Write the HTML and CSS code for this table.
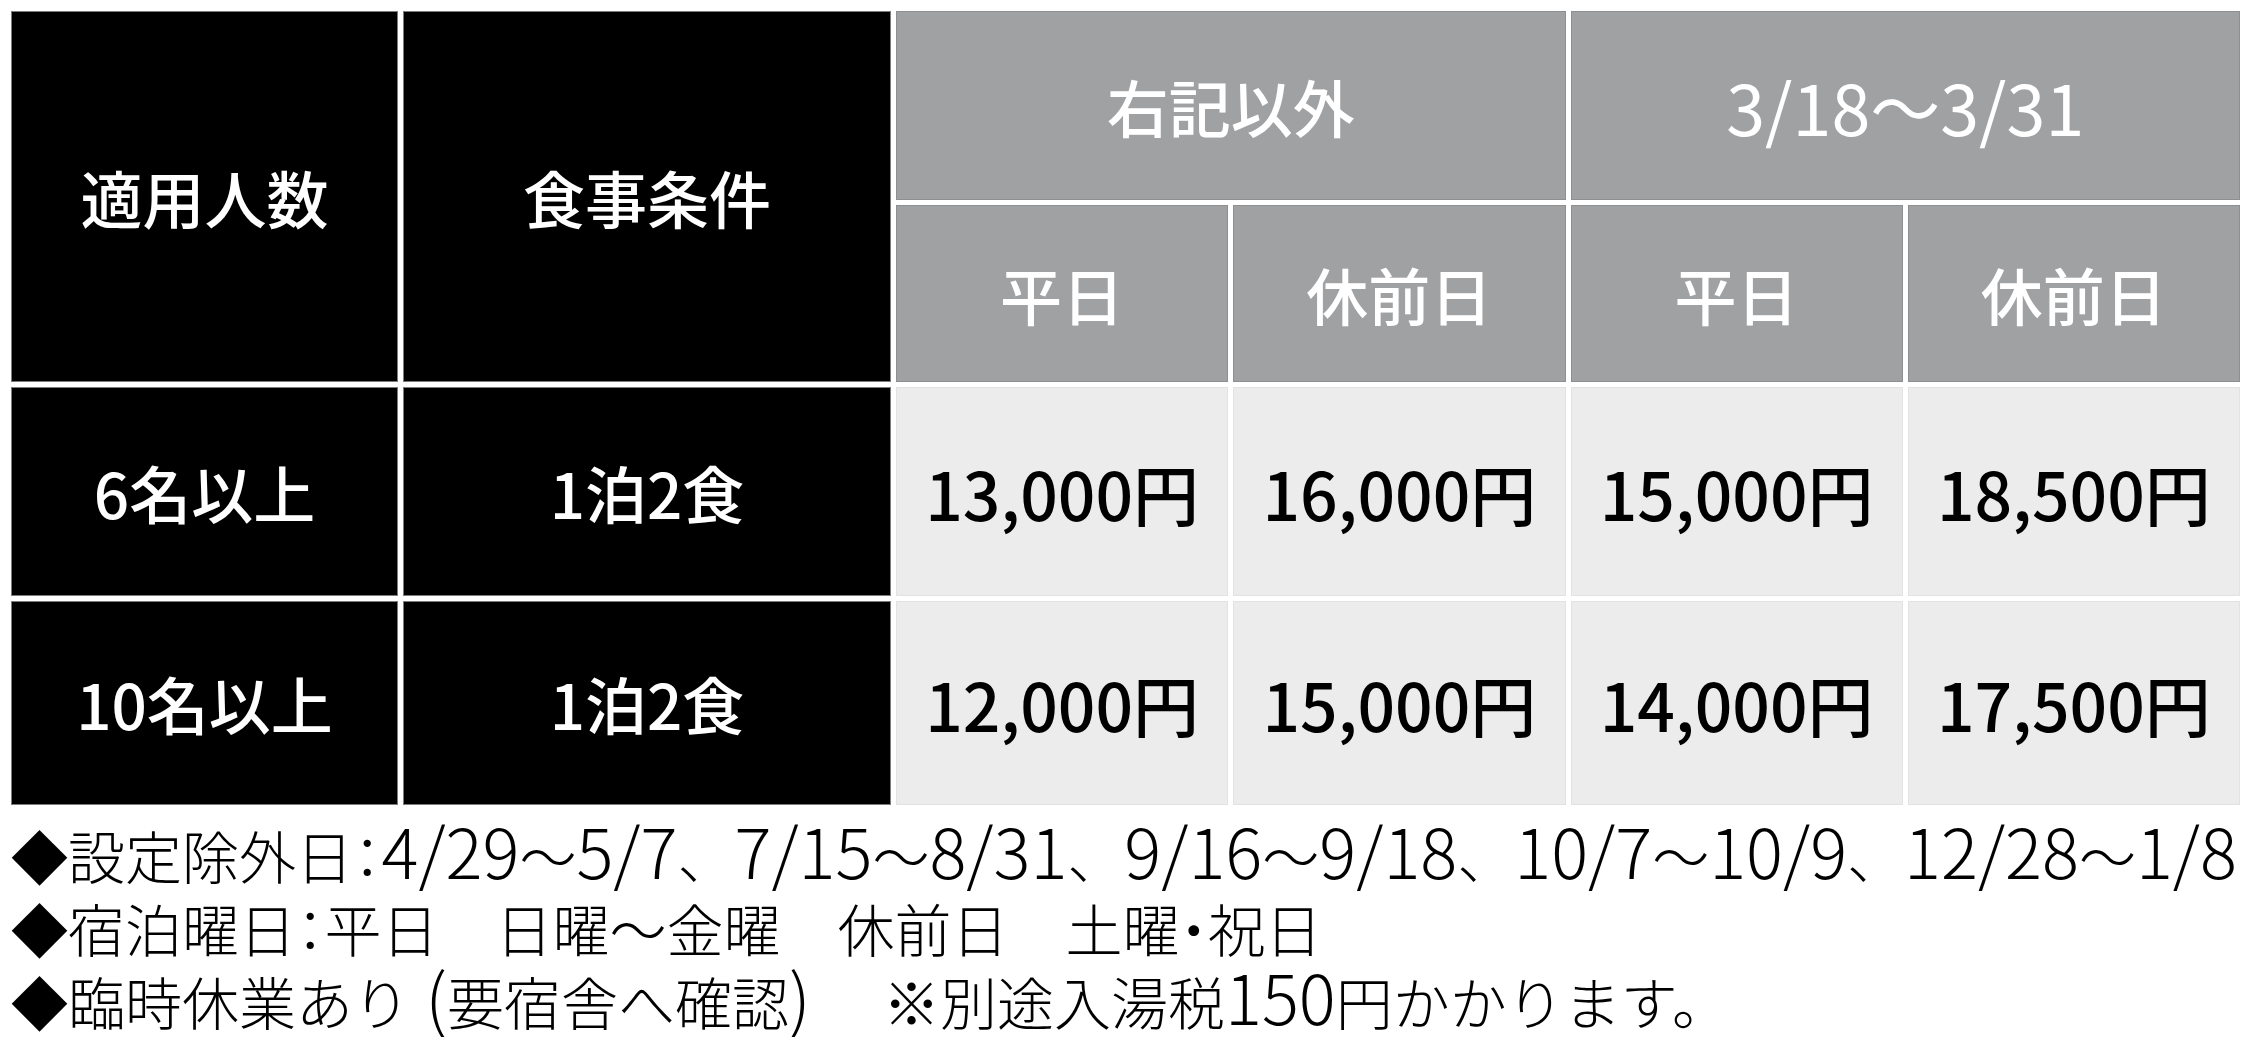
FILE: index.html
```html
<!DOCTYPE html>
<html lang="ja">
<head>
<meta charset="utf-8">
<title>料金表</title>
<link rel="stylesheet" href="styles.css">
</head>
<body>
<div class="page">
  <div class="price-table">
    <div class="cell dark tall">適用人数</div>
    <div class="cell dark tall">食事条件</div>
    <div class="cell head wide">右記以外</div>
    <div class="cell head wide dates">3/18～3/31</div>
    <div class="cell head">平日</div>
    <div class="cell head">休前日</div>
    <div class="cell head">平日</div>
    <div class="cell head">休前日</div>

    <div class="cell dark">6名以上</div>
    <div class="cell dark">1泊2食</div>
    <div class="cell price">13,000円</div>
    <div class="cell price">16,000円</div>
    <div class="cell price">15,000円</div>
    <div class="cell price">18,500円</div>

    <div class="cell dark">10名以上</div>
    <div class="cell dark">1泊2食</div>
    <div class="cell price">12,000円</div>
    <div class="cell price">15,000円</div>
    <div class="cell price">14,000円</div>
    <div class="cell price">17,500円</div>
  </div>

  <div class="notes">
    <p class="note">◆設定除外日<span class="half">：</span><span class="num">4/29</span>～<span class="num">5/7</span>、<span class="num">7/15</span>～<span class="num">8/31</span>、<span class="num">9/16</span>～<span class="num">9/18</span>、<span class="num">10/7</span>～<span class="num">10/9</span>、<span class="num">12/28</span>～<span class="num">1/8</span></p>
    <p class="note">◆宿泊曜日<span class="half">：</span>平日　日曜～金曜　休前日　土曜<span class="half">・</span>祝日</p>
    <p class="note">◆臨時休業あり<span class="num"> (</span>要宿舎へ確認<span class="num">)</span>　<span class="num"> </span>※別途入湯税<span class="num">150</span>円かかります。</p>
  </div>
</div>
</body>
</html>
```

FILE: styles.css
```css
html, body {
  margin: 0;
  padding: 0;
  background: #ffffff;
}

body {
  font-family: "Noto Sans CJK JP", "Noto Sans", sans-serif;
  color: #000000;
}

.page {
  padding: 11px 10px 0 11px;
}

.price-table {
  display: grid;
  grid-template-columns: 387px 488px repeat(4, 1fr);
  grid-template-rows: 189px 177px 209px 204px;
  gap: 5px;
  width: 2229px;
}

.cell {
  display: flex;
  align-items: center;
  justify-content: center;
  box-sizing: border-box;
  font-size: 62px;
  font-weight: 500;
  line-height: 1;
}

.dark {
  background: #000000;
  color: #ffffff;
  border: 1px solid #7c7c7c;
}

.tall {
  grid-row: span 2;
}

.head {
  background: #a0a1a3;
  color: #ffffff;
  border: 1px solid #8e8f91;
}

.wide {
  grid-column: span 2;
}

.dates {
  font-size: 70px;
  font-weight: 400;
}

.price {
  background: #ececec;
  color: #000000;
  border: 1px solid #e2e2e2;
  font-size: 66px;
}

.notes {
  margin-top: 13px;
}

.note {
  margin: 0;
  font-size: 57px;
  font-weight: 300;
  line-height: 73px;
  white-space: nowrap;
}

.num {
  font-size: 69px;
  line-height: 60px;
}

.half {
  font-feature-settings: "halt";
}
```
